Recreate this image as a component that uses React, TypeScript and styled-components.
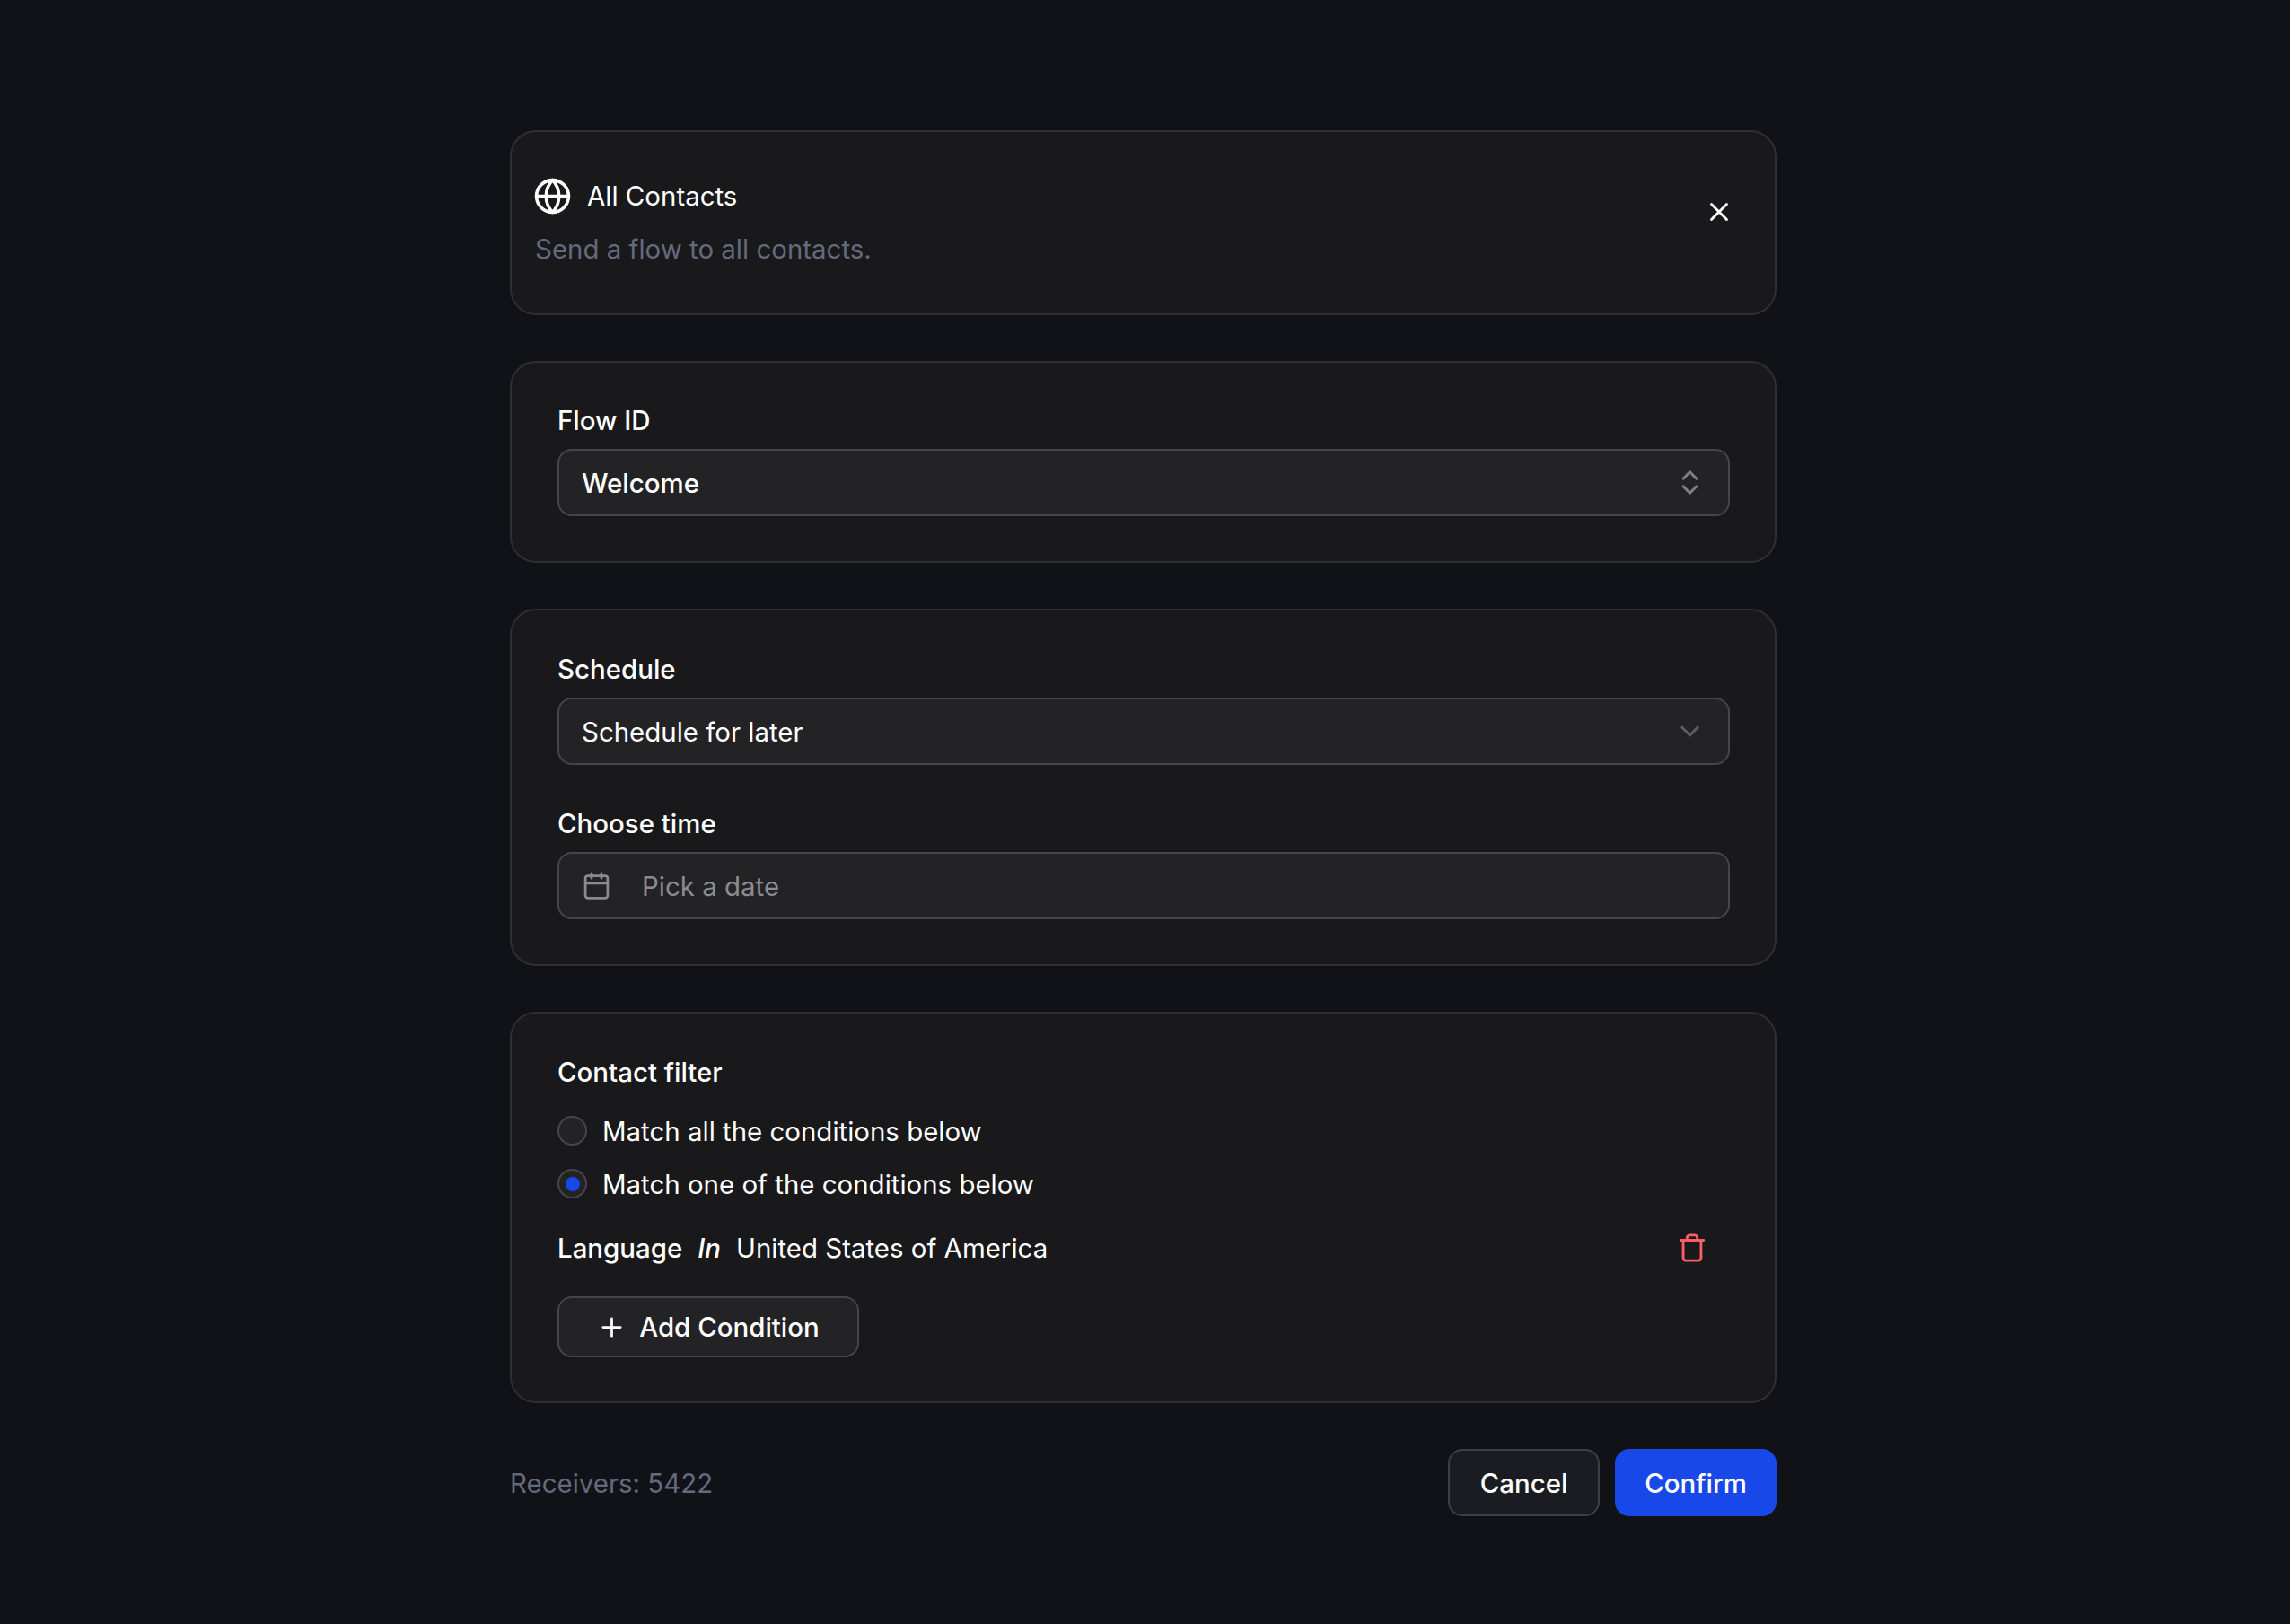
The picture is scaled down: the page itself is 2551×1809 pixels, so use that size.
import styled, { createGlobalStyle } from 'styled-components';
import { ChevronDown, ChevronsUpDown, Calendar, Globe, Plus, Trash, X } from 'lucide-react';

const GlobalStyle = createGlobalStyle`
  * {
    box-sizing: border-box;
  }

  html, body {
    margin: 0;
    background: #111218;
  }

  body {
    font-family: Inter, "Noto Sans", sans-serif;
    font-size: 29.45px;
    color: #ffffff;
  }
`;

const Page = styled.div`
  width: 2551px;
  height: 1809px;
  padding: 145px 0 0 568px;
  overflow: hidden;
`;

const Column = styled.main`
  width: 1411px;
  display: flex;
  flex-direction: column;
  gap: 51px;
`;

const Card = styled.section`
  background: #19191b;
  border: 2px solid #2f2f32;
  border-radius: 29px;
  padding: 45px 50px 49px 51px;
`;

const AudienceCard = styled(Card)`
  display: flex;
  justify-content: space-between;
  align-items: flex-start;
  padding: 52px 45px 48px 26px;
`;

const AudienceText = styled.div`
  display: flex;
  flex-direction: column;
  gap: 16px;
`;

const AudienceTitle = styled.div`
  display: flex;
  align-items: center;
  gap: 17px;
  height: 39px;
  line-height: 39px;

  svg {
    margin: 0 0 0 -2px;
    flex: none;
  }
`;

const AudienceHint = styled.div`
  color: #646a7b;
  line-height: 47px;
`;

const CloseButton = styled.button`
  display: flex;
  margin-top: 20px;
  padding: 0;
  background: none;
  border: none;
  color: #ffffff;
`;

const FlowCard = styled(Card)`
  padding-top: 44px;
  padding-bottom: 50px;
`;

const ScheduleCard = styled(Card)`
  padding-bottom: 50px;
`;

const Field = styled.div`
  & + & {
    margin-top: 45px;
  }
`;

const Label = styled.div`
  font-weight: 500;
  line-height: 40px;
  margin-bottom: 12px;
`;

const Control = styled.div`
  height: 75px;
  display: flex;
  align-items: center;
  justify-content: space-between;
  padding: 0 25px;
  background: #232325;
  border: 2px solid #464648;
  border-radius: 16px;

  svg {
    flex: none;
  }
`;

const ControlValue = styled.span<{ $strong?: boolean }>`
  font-weight: ${(p) => (p.$strong ? 500 : 400)};
`;

const ControlIcon = styled.span<{ $dim?: boolean }>`
  display: flex;
  color: ${(p) => (p.$dim ? '#5c5c61' : '#808084')};
`;

const DateControl = styled(Control)`
  justify-content: flex-start;
  gap: 34px;
  color: #8a8a90;
`;

const Placeholder = styled.span`
  color: #8b8b93;
`;

const RadioList = styled.div`
  display: flex;
  flex-direction: column;
  gap: 26px;
  margin-top: 29px;
`;

const RadioRow = styled.label`
  display: flex;
  align-items: center;
  gap: 17px;
  height: 33px;
`;

const RadioDot = styled.span<{ $checked?: boolean }>`
  width: 33px;
  height: 33px;
  display: flex;
  align-items: center;
  justify-content: center;
  background: #232325;
  border: 2px solid #464648;
  border-radius: 50%;

  &::after {
    content: '';
    width: 16px;
    height: 16px;
    border-radius: 50%;
    background: ${(p) => (p.$checked ? '#1849e8' : 'transparent')};
  }
`;

const ConditionRow = styled.div`
  display: flex;
  align-items: center;
  gap: 17px;
  height: 40px;
  line-height: 40px;
  margin-top: 35px;
  padding-right: 25px;

  strong {
    font-weight: 500;
  }

  em {
    font-weight: 500;
    font-style: italic;
  }
`;

const DeleteButton = styled.button`
  display: flex;
  margin-left: auto;
  padding: 0;
  background: none;
  border: none;
  color: #fb5f66;
`;

const AddButton = styled.button`
  height: 68px;
  width: 336px;
  display: flex;
  align-items: center;
  justify-content: center;
  gap: 14px;
  margin-top: 34px;
  padding: 0;
  background: #232325;
  border: 2px solid #464648;
  border-radius: 16px;
  color: #ffffff;
  font: inherit;
  font-weight: 500;
`;

const Footer = styled.footer`
  display: flex;
  align-items: center;
  justify-content: space-between;
`;

const Receivers = styled.span`
  color: #646a7b;
`;

const Actions = styled.div`
  display: flex;
  gap: 17px;
`;

const ActionButton = styled.button<{ $primary?: boolean }>`
  width: ${(p) => (p.$primary ? '180px' : '169px')};
  height: 75px;
  padding: 0;
  background: ${(p) => (p.$primary ? '#1849e8' : '#1b1c21')};
  border: 2px solid ${(p) => (p.$primary ? '#1849e8' : '#3f3f43')};
  border-radius: 16px;
  color: #ffffff;
  font: inherit;
  font-weight: 500;
`;

const App = () => {
  return (
    <Page>
      <GlobalStyle />
      <Column>
        <AudienceCard>
          <AudienceText>
            <AudienceTitle>
              <Globe size={43} strokeWidth={2} />
              All Contacts
            </AudienceTitle>
            <AudienceHint>Send a flow to all contacts.</AudienceHint>
          </AudienceText>
          <CloseButton>
            <X size={34} />
          </CloseButton>
        </AudienceCard>

        <FlowCard>
          <Label>Flow ID</Label>
          <Control>
            <ControlValue $strong>Welcome</ControlValue>
            <ControlIcon>
              <ChevronsUpDown size={35} />
            </ControlIcon>
          </Control>
        </FlowCard>

        <ScheduleCard>
          <Field>
            <Label>Schedule</Label>
            <Control>
              <ControlValue>Schedule for later</ControlValue>
              <ControlIcon $dim>
                <ChevronDown size={35} />
              </ControlIcon>
            </Control>
          </Field>
          <Field>
            <Label>Choose time</Label>
            <DateControl>
              <Calendar size={33} />
              <Placeholder>Pick a date</Placeholder>
            </DateControl>
          </Field>
        </ScheduleCard>

        <Card>
          <Label>Contact filter</Label>
          <RadioList>
            <RadioRow>
              <RadioDot />
              Match all the conditions below
            </RadioRow>
            <RadioRow>
              <RadioDot $checked />
              Match one of the conditions below
            </RadioRow>
          </RadioList>
          <ConditionRow>
            <strong>Language</strong>
            <em>In</em>
            <span>United States of America</span>
            <DeleteButton>
              <Trash size={34} />
            </DeleteButton>
          </ConditionRow>
          <AddButton>
            <Plus size={33} />
            Add Condition
          </AddButton>
        </Card>

        <Footer>
          <Receivers>Receivers: 5422</Receivers>
          <Actions>
            <ActionButton>Cancel</ActionButton>
            <ActionButton $primary>Confirm</ActionButton>
          </Actions>
        </Footer>
      </Column>
    </Page>
  );
};

export default App;
